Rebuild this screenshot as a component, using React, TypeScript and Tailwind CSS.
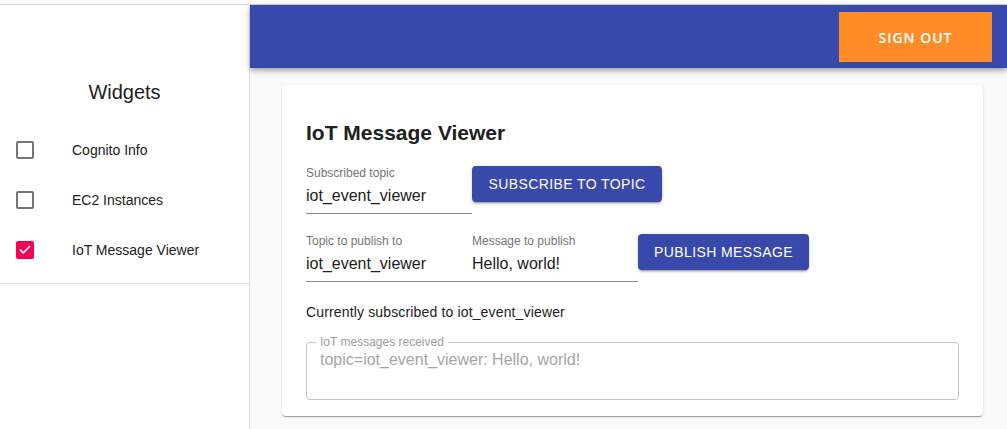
import { Check } from 'lucide-react';

const widgets = [
  { name: 'Cognito Info', checked: false },
  { name: 'EC2 Instances', checked: false },
  { name: 'IoT Message Viewer', checked: true },
];

const CheckBox = ({ checked }: { checked: boolean }) =>
  checked ? (
    <span className="flex items-center justify-center w-[18px] h-[18px] rounded-[2px] bg-[#f50057]">
      <Check className="w-[14px] h-[14px] text-white" strokeWidth={3} />
    </span>
  ) : (
    <span className="block w-[18px] h-[18px] rounded-[2px] border-2 border-[#757575]" />
  );

const Field = ({ label, value, width }: { label: string; value: string; width: string }) => (
  <div className={`${width} border-b border-[#8a8a8a]`}>
    <div className="text-[12px] leading-[14px] text-[#757575]">{label}</div>
    <div className="mt-[6px] pb-[7px] text-[16px] leading-[20px] text-[#212121]">{value}</div>
  </div>
);

const Button = ({ children, width }: { children: React.ReactNode; width: string }) => (
  <button
    className={`${width} h-[36px] rounded-[4px] bg-[#3949ab] text-white text-[14px] tracking-[0.4px] uppercase shadow-[0_3px_1px_-2px_rgba(0,0,0,0.2),0_2px_2px_0_rgba(0,0,0,0.14),0_1px_5px_0_rgba(0,0,0,0.12)]`}
  >
    {children}
  </button>
);

const Sidebar = () => (
  <div className="w-[250px] shrink-0 bg-white border-r border-[#e0e0e0]">
    <div className="pt-[73px] text-center text-[20px] leading-[28px] text-[#212121]">Widgets</div>
    <div className="mt-[19px] pb-[8px] border-b border-[#e0e0e0]">
      {widgets.map((w) => (
        <div key={w.name} className="flex items-center h-[50px] pl-[16px]">
          <CheckBox checked={w.checked} />
          <span className="ml-[38px] text-[14px] text-[#212121]">{w.name}</span>
        </div>
      ))}
    </div>
  </div>
);

const Header = () => (
  <div className="relative z-10 h-[63px] bg-[#3949ab] flex items-start justify-end pr-[15px] pt-[7px] shadow-[0_2px_4px_-1px_rgba(0,0,0,0.2),0_4px_5px_0_rgba(0,0,0,0.14),0_1px_10px_0_rgba(0,0,0,0.12)]">
    <button
      className="w-[153px] h-[50px] bg-[#ff8c27] text-white text-[14px] font-semibold tracking-[1px]"
      style={{ fontFamily: '"Open Sans", sans-serif' }}
    >
      SIGN OUT
    </button>
  </div>
);

const MessageCard = () => (
  <div className="ml-[32px] w-[701px] h-[331px] bg-white rounded-[4px] px-[24px] pt-[34px] shadow-[0_2px_1px_-1px_rgba(0,0,0,0.2),0_1px_1px_0_rgba(0,0,0,0.14),0_1px_3px_0_rgba(0,0,0,0.12)]">
    <h2 className="text-[21px] leading-[28px] font-bold text-[#212121]">IoT Message Viewer</h2>

    <div className="mt-[19px] flex items-start">
      <Field label="Subscribed topic" value="iot_event_viewer" width="w-[166px]" />
      <Button width="w-[190px]">Subscribe to topic</Button>
    </div>

    <div className="mt-[20px] flex items-start">
      <Field label="Topic to publish to" value="iot_event_viewer" width="w-[166px]" />
      <Field label="Message to publish" value="Hello, world!" width="w-[166px]" />
      <Button width="w-[171px]">Publish message</Button>
    </div>

    <div className="mt-[20px] text-[14px] leading-[20px] tracking-[0.15px] text-[#212121]">
      Currently subscribed to iot_event_viewer
    </div>

    <div className="relative mt-[20px] w-[653px] h-[58px] rounded-[4px] border border-[#c4c4c4] px-[13px] pt-[7px]">
      <span className="absolute -top-[8px] left-[9px] px-[4px] bg-white text-[12px] leading-[14px] text-[#9e9e9e]">
        IoT messages received
      </span>
      <div className="text-[16px] leading-[20px] text-[#a6a6a6]">topic=iot_event_viewer: Hello, world!</div>
    </div>
  </div>
);

export default function App() {
  return (
    <div className="w-[1007px] h-[429px] overflow-hidden bg-white flex flex-col" style={{ fontFamily: '"Liberation Sans", Arial, sans-serif' }}>
      <div className="h-[5px] shrink-0 border-b border-[#d6d6d6]" />
      <div className="flex flex-1 min-h-0">
        <Sidebar />
        <div className="flex-1 flex flex-col bg-[#fafafa]">
          <Header />
          <div className="pt-[17px]">
            <MessageCard />
          </div>
        </div>
      </div>
    </div>
  );
}
